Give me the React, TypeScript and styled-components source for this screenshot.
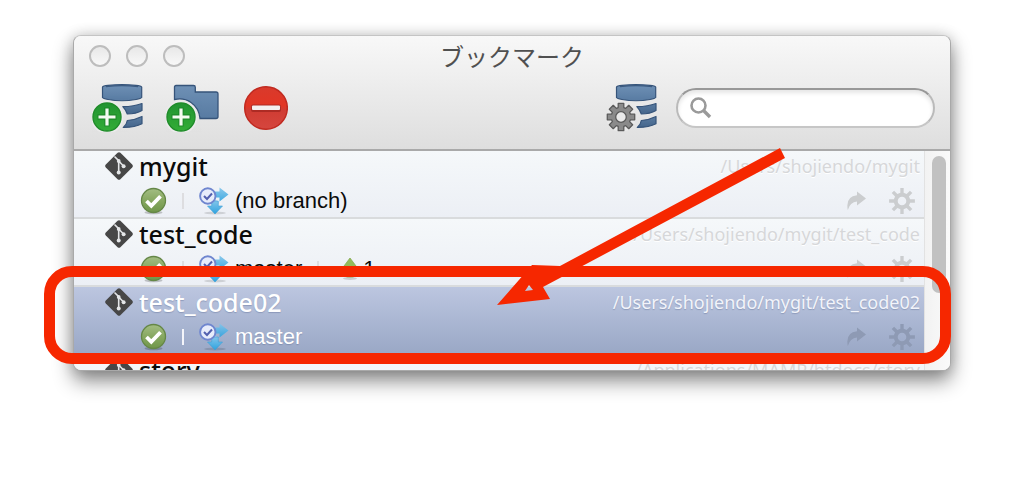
import React from "react";
import styled, { createGlobalStyle, css } from "styled-components";

const RED = "#f62700";
const lucida = `"Noto Sans", "Noto Sans CJK JP", sans-serif`;

const GlobalStyle = createGlobalStyle`
  *, *::before, *::after { box-sizing: border-box; }
  body { margin: 0; background: #fff; font-family: ${lucida}; }
  button { padding: 0; border: 0; background: none; font: inherit; color: inherit; }
  svg { display: block; }
`;

const Stage = styled.main`
  position: relative;
  padding: 35px 73px 110px;
`;

const Window = styled.section`
  border: 1px solid #a9a9a9;
  border-top-color: #c4c4c4;
  border-radius: 8px;
  overflow: hidden;
  background: #f6f6f6;
  box-shadow: 0 10px 20px rgba(0, 0, 0, 0.46), 0 0 14px rgba(0, 0, 0, 0.16);
`;

const Header = styled.header`
  height: 115px;
  border-bottom: 2px solid #a9a9a9;
  background: linear-gradient(#f8f8f8, #dedede);
`;

const TitleBar = styled.div`
  display: grid;
  grid-template-columns: 1fr auto 1fr;
  align-items: center;
  height: 40px;
  padding: 0 15px;
`;

const Lights = styled.div`
  display: flex;
  gap: 15px;
`;

const Light = styled.button`
  width: 22px;
  height: 22px;
  border: 2px solid #bdbdbd;
  border-radius: 50%;
  background: linear-gradient(#e8e8e8, #f8f8f8);
`;

const Title = styled.h1`
  margin: 0;
  font: 400 24px/26px "Noto Sans CJK JP", sans-serif;
  color: #505050;
`;

const Toolbar = styled.div`
  display: flex;
  align-items: flex-start;
  gap: 22px;
  padding: 8px 15px 0 18px;
`;

const ToolGroup = styled.div`
  display: flex;
  align-items: flex-start;
  gap: 18px;
  margin-left: auto;
`;

const ToolButton = styled.button`
  height: 48px;
`;

const SearchBox = styled.label`
  display: flex;
  align-items: center;
  gap: 8px;
  width: 259px;
  height: 40px;
  margin-top: 4px;
  padding: 0 16px 0 12px;
  border: 2px solid #bababa;
  border-top-color: #989898;
  border-bottom-color: #c6c6c6;
  border-radius: 20px;
  background: #fff;
  box-shadow: inset 0 3px 4px rgba(0, 0, 0, 0.1);
`;

const SearchInput = styled.input`
  flex: 1;
  min-width: 0;
  border: 0;
  outline: 0;
  background: transparent;
  font: 18px/24px ${lucida};
`;

const ListPane = styled.div`
  display: flex;
  height: 219px;
  overflow: hidden;
`;

const Rows = styled.ul`
  flex: 1;
  margin: 0;
  padding: 0;
  list-style: none;
`;

const Row = styled.li<{ $selected?: boolean }>`
  height: 68px;
  padding: 0 4px 0 31px;
  border-bottom: 2px solid #d9dbdd;
  background: linear-gradient(#f5f8fa, #eceff5);
  color: #0b0b0b;
  ${(p) =>
    p.$selected &&
    css`
      border-bottom-color: #8796b8;
      background: linear-gradient(#bcc6e0, #9aa8c6);
      color: #fff;
      text-shadow: 0 1px 1px rgba(90, 105, 145, 0.4);
    `}
`;

const NameLine = styled.div`
  display: flex;
  align-items: center;
  gap: 6px;
  height: 30px;
`;

const Name = styled.h2`
  flex: 1;
  margin: 0;
  font: 500 25px/30px ${lucida};
`;

const Path = styled.span<{ $selected?: boolean }>`
  font-size: 18px;
  line-height: 30px;
  color: ${(p) => (p.$selected ? "#f2f4fa" : "#d6d7d9")};
  text-shadow: ${(p) => (p.$selected ? "inherit" : "0 1px 0 #fff")};
`;

const StatusLine = styled.div`
  display: flex;
  align-items: center;
  height: 36px;
  padding: 4px 5px 0 35px;
`;

const Divider = styled.span<{ $selected?: boolean }>`
  width: 2px;
  height: 16px;
  margin: 0 15px;
  background: ${(p) => (p.$selected ? "#f4f5fa" : "#dddde0")};
`;

const Branch = styled.span`
  padding-left: 5px;
  font: 22px/32px "Liberation Sans", Arial, sans-serif;
`;

const RowActions = styled.div<{ $selected?: boolean }>`
  display: flex;
  align-items: center;
  gap: 22px;
  margin-left: auto;
  color: ${(p) => (p.$selected ? "#8e9ab4" : "#cbcdcf")};
`;

const ScrollTrack = styled.div`
  width: 26px;
  padding: 5px 4px 0 7px;
  border-left: 1px solid #e2e2e2;
  background: linear-gradient(90deg, #f2f2f2, #fafafa);
`;

const ScrollThumb = styled.div`
  width: 14px;
  height: 137px;
  border-radius: 7px;
  background: #c1c1c1;
`;

const Highlight = styled.div`
  position: absolute;
  top: 266px;
  left: 44px;
  right: 73px;
  height: 98px;
  border: 11px solid ${RED};
  border-radius: 28px;
  pointer-events: none;
`;

const Pointer = styled.svg`
  position: absolute;
  top: 145px;
  right: 234px;
  pointer-events: none;
`;

const gearPath = (cx: number, cy: number, outer: number, inner: number, wide: number, tip: number) => {
  const points: string[] = [];
  for (let i = 0; i < 8; i++) {
    const a = (i * Math.PI) / 4;
    const at = (r: number, d: number) =>
      `${(cx + r * Math.cos(a + d)).toFixed(2)} ${(cy + r * Math.sin(a + d)).toFixed(2)}`;
    points.push(at(inner, -wide), at(outer, -tip), at(outer, tip), at(inner, wide));
  }
  return `M${points.join("L")}Z`;
};

const ring = (cx: number, cy: number, r: number) =>
  `M${cx - r} ${cy}a${r} ${r} 0 1 0 ${2 * r} 0a${r} ${r} 0 1 0 ${-2 * r} 0Z`;

const HiddenSvg = styled.svg`
  position: absolute;
`;

const Defs = () => (
  <HiddenSvg width="0" height="0" aria-hidden="true">
    <defs>
      <linearGradient id="steel" x2="0" y2="1">
        <stop offset="0" stopColor="#6e90b5" />
        <stop offset="1" stopColor="#587ba2" />
      </linearGradient>
      <linearGradient id="steelDark" x2="0" y2="1">
        <stop offset="0" stopColor="#5b7ca1" />
        <stop offset="1" stopColor="#44658b" />
      </linearGradient>
      <linearGradient id="plusGreen" x2="0" y2="1">
        <stop offset="0" stopColor="#229432" />
        <stop offset="1" stopColor="#33ad37" />
      </linearGradient>
      <linearGradient id="okGreen" x2="0" y2="1">
        <stop offset="0" stopColor="#a3bd83" />
        <stop offset="0.5" stopColor="#87a861" />
        <stop offset="1" stopColor="#6f964a" />
      </linearGradient>
      <linearGradient id="stopRed" x2="0" y2="1">
        <stop offset="0" stopColor="#d93a2c" />
        <stop offset="0.45" stopColor="#e23524" />
        <stop offset="0.55" stopColor="#d03c33" />
        <stop offset="1" stopColor="#d5463e" />
      </linearGradient>
      <linearGradient id="skyBlue" x2="0" y2="1">
        <stop offset="0" stopColor="#82c4ea" />
        <stop offset="1" stopColor="#2ea3df" />
      </linearGradient>
    </defs>
  </HiddenSvg>
);

const PlusBadge = () => (
  <g>
    <circle cx="15" cy="33" r="16.5" fill="#ebebeb" />
    <circle cx="15" cy="33" r="14" fill="url(#plusGreen)" stroke="#218c2b" strokeWidth="1.4" />
    <path d="M15 23.5v19M5.5 33h19" stroke="#157a22" strokeWidth="5.4" opacity="0.6" />
    <path d="M15 24.5v17M6.5 33h17" stroke="#f3faf1" strokeWidth="3.2" />
  </g>
);

const Disks = () => (
  <g stroke="#36547a" strokeWidth="1.2" strokeLinejoin="round">
    <path
      d="M10.500 3Q11 2 16 1.400Q30 -0.200 44 1.400Q49 2 49.700 3V13.500Q49 14.500 44 15.500Q30 18 16 15.500Q11 14.500 10.500 13.500Z"
      fill="url(#steel)"
    />
    <path d="M14 2.600Q30 0.600 46 2.600" fill="none" stroke="#3b5a80" strokeWidth="1.4" />
    <path d="M30.800 22.700Q42 22.500 50 19.500V26.500Q44 30 35.300 30Q34 26 30.800 22.700Z" fill="url(#steelDark)" />
    <path d="M35.300 36.500Q43 36 50 32.500V39.800Q43 43.500 31.300 43.400Q35 40 35.300 36.500Z" fill="url(#steelDark)" />
  </g>
);

const AddRepositoryIcon = () => (
  <svg width="52" height="48" viewBox="0 0 52 48">
    <Disks />
    <PlusBadge />
  </svg>
);

const AddFolderIcon = () => (
  <svg width="54" height="48" viewBox="0 0 54 48">
    <path
      d="M8.500 3Q8.500 1.500 10 1.500H27.500Q29.300 1.500 29.300 3.300V8H50Q52 8 52 10V32.500Q52 34.500 50 34.500H34Q33 24 25 18.500Q18 13.500 8.500 15.500Z"
      fill="url(#steel)"
      stroke="#36547a"
      strokeWidth="1.3"
    />
    <PlusBadge />
  </svg>
);

const RemoveIcon = () => (
  <svg width="46" height="48" viewBox="0 0 46 48">
    <circle cx="24" cy="24" r="21.300" fill="url(#stopRed)" stroke="#c02a20" strokeWidth="1.5" />
    <rect x="9" y="20.500" width="30" height="7.500" rx="2" fill="#ad2b24" />
    <rect x="10" y="21.500" width="28" height="4.500" rx="1" fill="#f4efef" />
  </svg>
);

const RepositorySettingsIcon = () => (
  <svg width="52" height="48" viewBox="0 0 52 48">
    <Disks />
    <circle cx="15" cy="33" r="15" fill="#e9e9e9" />
    <path
      d={gearPath(15, 33, 14, 9.8, 0.29, 0.2) + ring(15, 33, 5.3)}
      fill="#8a8a8a"
      fillRule="evenodd"
      stroke="#5a5a5a"
      strokeWidth="1.3"
      strokeLinejoin="round"
    />
  </svg>
);

const SearchIcon = () => (
  <svg width="22" height="22" viewBox="0 0 22 22" fill="none" stroke="#9a9a9a">
    <circle cx="8.500" cy="8.500" r="7" strokeWidth="2.6" />
    <path d="M13.500 13.500L20 20" strokeWidth="3.4" />
  </svg>
);

const GitIcon = () => (
  <svg width="28" height="28" viewBox="0 0 28 28">
    <path
      d="M12.600 0.800Q14 -0.500 15.400 0.800L27.200 12.600Q28.500 14 27.200 15.400L15.400 27.200Q14 28.500 12.600 27.200L0.800 15.400Q-0.500 14 0.800 12.600Z"
      fill="#474747"
    />
    <g stroke="#e4e6e8" strokeWidth="1.6" fill="none">
      <path d="M9.500 4.500L13.700 8.700V20.500M13.700 9L18.500 14" />
    </g>
    <g fill="#e4e6e8">
      <circle cx="13.700" cy="9" r="1.900" />
      <circle cx="13.700" cy="20.500" r="2" />
      <circle cx="18.600" cy="14.200" r="2" />
    </g>
  </svg>
);

const CheckIcon = () => (
  <svg width="27" height="28" viewBox="0 0 27 28">
    <ellipse cx="13.500" cy="25.500" rx="9" ry="1.800" fill="#000" opacity="0.2" />
    <circle cx="13.500" cy="13.500" r="12" fill="url(#okGreen)" stroke="#658747" strokeWidth="1.3" />
    <path d="M6.500 14L11.300 18.800L20.500 9.300" fill="none" stroke="#fff" strokeWidth="3.8" />
  </svg>
);

const BranchIcon = () => (
  <svg width="31" height="28" viewBox="0 0 31 28">
    <ellipse cx="16" cy="26" rx="11" ry="1.500" fill="#000" opacity="0.13" />
    <path d="M11 12L18 18" stroke="#a9cbe8" strokeWidth="6" />
    <path d="M15 4.500H20.500V0.500L29.500 7.500L20.500 14.500V10.500H15Z" fill="url(#skyBlue)" opacity="0.9" />
    <path d="M12.700 14H19.300V19H23.500L16 27L8.500 19H12.700Z" fill="url(#skyBlue)" stroke="#3d9fd6" strokeWidth="0.6" />
    <circle cx="8.800" cy="9" r="7.700" fill="#e7ecfb" stroke="#6f86cf" strokeWidth="1.9" />
    <path d="M5 9L8 12L13 6.500" fill="none" stroke="#5360ae" strokeWidth="2" />
  </svg>
);

const AheadIcon = () => (
  <svg width="24" height="24" viewBox="-8 0 24 24">
    <ellipse cx="8" cy="21.500" rx="7" ry="1.500" fill="#000" opacity="0.15" />
    <path d="M8 1L15.500 11H11.500V20H4.500V11H0.500Z" fill="#94bb5c" stroke="#85ab50" strokeWidth="0.8" />
  </svg>
);

const ShareIcon = () => (
  <svg width="21" height="20" viewBox="0 0 21 20">
    <path d="M11 0.500L20 7.500L11 14.500V10.500Q4 11 1.800 19Q-0.800 5.500 11 4.300Z" fill="currentColor" />
  </svg>
);

const GearIcon = () => (
  <svg width="26" height="26" viewBox="0 0 26 26">
    <path
      d={gearPath(13, 13, 13, 8.3, 0.2, 0.13) + ring(13, 13, 4.3)}
      fill="currentColor"
      fillRule="evenodd"
    />
  </svg>
);

type Repository = {
  name: string;
  path: string;
  branch?: string;
  ahead?: number;
  selected?: boolean;
};

const repositories: Repository[] = [
  { name: "mygit", path: "/Users/shojiendo/mygit", branch: "(no branch)" },
  { name: "test_code", path: "/Users/shojiendo/mygit/test_code", branch: "master", ahead: 1 },
  { name: "test_code02", path: "/Users/shojiendo/mygit/test_code02", branch: "master", selected: true },
  { name: "story", path: "/Applications/MAMP/htdocs/story" },
];

const RepositoryRow = ({ name, path, branch, ahead, selected }: Repository) => (
  <Row $selected={selected}>
    <NameLine>
      <GitIcon />
      <Name>{name}</Name>
      <Path $selected={selected}>{path}</Path>
    </NameLine>
    {branch && (
      <StatusLine>
        <CheckIcon />
        <Divider $selected={selected} />
        <BranchIcon />
        <Branch>{branch}</Branch>
        {ahead !== undefined && (
          <>
            <Divider />
            <AheadIcon />
            <Branch>{ahead}</Branch>
          </>
        )}
        <RowActions $selected={selected}>
          <button type="button" aria-label={`Open ${name}`}>
            <ShareIcon />
          </button>
          <button type="button" aria-label={`Settings for ${name}`}>
            <GearIcon />
          </button>
        </RowActions>
      </StatusLine>
    )}
  </Row>
);

export default function App() {
  return (
    <Stage>
      <GlobalStyle />
      <Defs />
      <Window>
        <Header>
          <TitleBar>
            <Lights>
              <Light type="button" aria-label="Close" />
              <Light type="button" aria-label="Minimize" />
              <Light type="button" aria-label="Zoom" />
            </Lights>
            <Title>ブックマーク</Title>
          </TitleBar>
          <Toolbar>
            <ToolButton type="button" aria-label="Add repository">
              <AddRepositoryIcon />
            </ToolButton>
            <ToolButton type="button" aria-label="Add folder">
              <AddFolderIcon />
            </ToolButton>
            <ToolButton type="button" aria-label="Remove">
              <RemoveIcon />
            </ToolButton>
            <ToolGroup>
              <ToolButton type="button" aria-label="Repository settings">
                <RepositorySettingsIcon />
              </ToolButton>
              <SearchBox>
                <SearchIcon />
                <SearchInput type="text" aria-label="Search bookmarks" />
              </SearchBox>
            </ToolGroup>
          </Toolbar>
        </Header>
        <ListPane>
          <Rows>
            {repositories.map((repo) => (
              <RepositoryRow key={repo.name} {...repo} />
            ))}
          </Rows>
          <ScrollTrack>
            <ScrollThumb />
          </ScrollTrack>
        </ListPane>
      </Window>
      <Highlight />
      <Pointer width="300" height="165" viewBox="490 145 300 165" aria-hidden="true">
        <path
          d="M497 305L532 265L560 266L780 148L785 158L543 287L550 299ZM529 285L525 291L533 290Z"
          fill={RED}
          fillRule="evenodd"
        />
      </Pointer>
    </Stage>
  );
}
